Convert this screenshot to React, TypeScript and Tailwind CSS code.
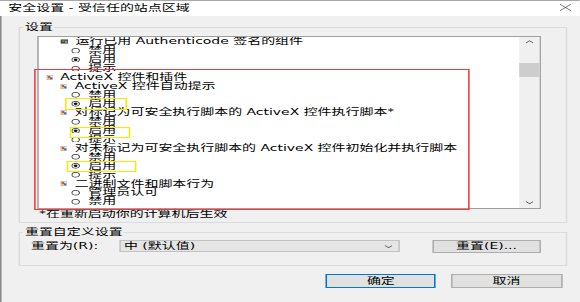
type Row = {
  kind: 'cat' | 'sub' | 'radio'
  text: string
  icon?: 'dark' | 'opt'
  checked?: boolean
}

const rows: Row[] = [
  { kind: 'sub', icon: 'dark', text: '运行已用 Authenticode 签名的组件' },
  { kind: 'radio', text: '禁用' },
  { kind: 'radio', text: '启用', checked: true },
  { kind: 'radio', text: '提示' },
  { kind: 'cat', icon: 'opt', text: 'ActiveX 控件和插件' },
  { kind: 'sub', icon: 'opt', text: 'ActiveX 控件自动提示' },
  { kind: 'radio', text: '禁用' },
  { kind: 'radio', text: '启用', checked: true },
  { kind: 'sub', icon: 'opt', text: '对标记为可安全执行脚本的 ActiveX 控件执行脚本*' },
  { kind: 'radio', text: '禁用' },
  { kind: 'radio', text: '启用', checked: true },
  { kind: 'radio', text: '提示' },
  { kind: 'sub', icon: 'opt', text: '对未标记为可安全执行脚本的 ActiveX 控件初始化并执行脚本' },
  { kind: 'radio', text: '禁用' },
  { kind: 'radio', text: '启用', checked: true },
  { kind: 'radio', text: '提示' },
  { kind: 'sub', icon: 'opt', text: '二进制文件和脚本行为' },
  { kind: 'radio', text: '管理员认可' },
  { kind: 'radio', text: '禁用' },
]

const rowPad = {
  cat: 'pl-[5px] gap-[4.5px]',
  sub: 'pl-[14px] gap-[4.8px]',
  radio: 'pl-[21.5px] gap-[5px]',
}

function Radio({ checked }: { checked?: boolean }) {
  return (
    <svg width="5.6" height="5.6" viewBox="0 0 12 12" className="shrink-0">
      <circle cx="6" cy="6" r="5.2" fill="#fff" stroke="#333" strokeWidth="1.5" />
      {checked && <circle cx="6" cy="6" r="2.6" fill="#111" />}
    </svg>
  )
}

function OptIcon() {
  return (
    <svg width="4.5" height="5" viewBox="0 0 9 10" className="shrink-0">
      <rect x="0.5" y="0.5" width="8" height="9" fill="#fff" stroke="#8c8c8c" />
      <rect x="1.5" y="2" width="3.5" height="4" fill="#e0502c" />
      <rect x="4.5" y="4.5" width="3.5" height="4" fill="#3a6fcc" />
      <rect x="1.5" y="6" width="3" height="2.5" fill="#f2c230" />
    </svg>
  )
}

function DarkIcon() {
  return (
    <svg width="5" height="5" viewBox="0 0 10 10" className="shrink-0">
      <rect x="0" y="1" width="10" height="8" fill="#2f2f2f" />
      <rect x="1.5" y="2.5" width="4" height="4" fill="#5aa040" />
      <rect x="6" y="3" width="3" height="5" fill="#9a9a9a" />
    </svg>
  )
}

function Chevron({ up }: { up?: boolean }) {
  return (
    <svg width="5.4" height="3.5" viewBox="0 0 8 5">
      <polyline
        points={up ? '0.5,4.5 4,1 7.5,4.5' : '0.5,0.5 4,4 7.5,0.5'}
        fill="none"
        stroke="#606060"
        strokeWidth="1"
      />
    </svg>
  )
}

export default function App() {
  return (
    <div className="h-[302px] w-[580px] overflow-hidden bg-[#f0f0f0]">
      <div className="relative h-[302px] w-[374.2px] origin-top-left scale-x-[1.55] font-['DejaVu_Sans','Noto_Sans_CJK_SC',sans-serif] text-[9px] text-black">
        {/* title bar */}
        <div className="flex h-[16px] items-start border-t border-[#a8a8a8] bg-white pt-[1.5px] leading-[10px]">
          <span className="pl-[5.4px]">安全设置 - 受信任的站点区域</span>
          <svg width="7.7" height="7" viewBox="0 0 11 10" className="ml-auto mr-[5.2px] mt-[1.5px]">
            <line x1="0.5" y1="0.5" x2="10.5" y2="9.5" stroke="#444" strokeWidth="0.8" />
            <line x1="10.5" y1="0.5" x2="0.5" y2="9.5" stroke="#444" strokeWidth="0.8" />
          </svg>
        </div>

        <div className="h-[286px] border-l border-[#8a8a8a] bg-[#f0f0f0] pt-[6px]">
          <fieldset className="ml-[10.6px] h-[201px] w-[354.2px] border border-[#dcdcdc]">
            <legend className="ml-[2.5px] px-[1px] leading-[10px]">设置</legend>
            <div className="ml-[11.3px] mt-[4px] flex h-[173px] w-[325.1px] border border-[#a0a0a0] bg-white">
              <div className="flex-1 overflow-hidden pt-[0.25px]">
                {rows.map((r, i) => (
                  <div key={i} className={`flex h-[8.9px] items-center whitespace-nowrap leading-[8.9px] ${rowPad[r.kind]}`}>
                    {r.kind === 'radio' ? (
                      <Radio checked={r.checked} />
                    ) : r.icon === 'dark' ? (
                      <DarkIcon />
                    ) : (
                      <OptIcon />
                    )}
                    <span>{r.text}</span>
                  </div>
                ))}
              </div>
              <div className="flex w-[12.9px] flex-col bg-[#f0f0f0]">
                <div className="flex h-[10px] items-center justify-center">
                  <Chevron up />
                </div>
                <div className="mx-[0.4px] mt-[15.7px] h-[14.6px] bg-[#cdcdcd]" />
                <div className="flex-1" />
                <div className="flex h-[10px] items-center justify-center">
                  <Chevron />
                </div>
              </div>
            </div>
            <div className="ml-[12.6px] h-[10px] leading-[10px]">*在重新启动你的计算机后生效</div>
          </fieldset>

          <fieldset className="ml-[10.6px] mt-[4px] h-[38.5px] w-[354.2px] border border-[#dcdcdc]">
            <legend className="ml-[2.5px] px-[1px] leading-[10px]">重置自定义设置</legend>
            <div className="ml-[7.4px] mt-[2.5px] flex h-[13.5px] items-center">
              <span className="w-[57.4px] leading-[10px]">重置为(R):</span>
              <div className="flex h-[12px] w-[181.1px] items-center border border-[#c2c2c2] bg-[#e5e5e5] pl-[1.6px] pr-[4px] leading-[10px]">
                <span>中 (默认值)</span>
                <span className="ml-auto flex">
                  <Chevron />
                </span>
              </div>
              <button className="ml-[20.4px] flex h-[13.5px] w-[70.1px] items-center justify-center border border-[#adadad] bg-[#e1e1e1] leading-[10px]">
                重置(E)...
              </button>
            </div>
          </fieldset>

          <div className="mt-[8.5px] flex justify-end gap-[9.7px] pr-[11.6px]">
            <button className="flex h-[14px] w-[71.2px] items-center justify-center border-[1.3px] border-[#0078d7] bg-[#e1e1e1] leading-[10px]">
              确定
            </button>
            <button className="flex h-[14px] w-[71.6px] items-center justify-center border border-[#adadad] bg-[#e1e1e1] leading-[10px]">
              取消
            </button>
          </div>
        </div>

        {/* annotation boxes */}
        <div className="absolute left-[22.4px] top-[68.5px] h-[141px] w-[281px] border-[1.3px] border-[#f03a3a]" />
        <div className="absolute left-[41.9px] top-[98px] h-[11.5px] w-[40.5px] border-[1.3px] border-[#f5ea00]" />
        <div className="absolute left-[45.2px] top-[127px] h-[11px] w-[39.2px] border-[1.3px] border-[#f5ea00]" />
        <div className="absolute left-[43.4px] top-[160.7px] h-[11.6px] w-[44.8px] border-[1.3px] border-[#f5ea00]" />
      </div>
    </div>
  )
}
